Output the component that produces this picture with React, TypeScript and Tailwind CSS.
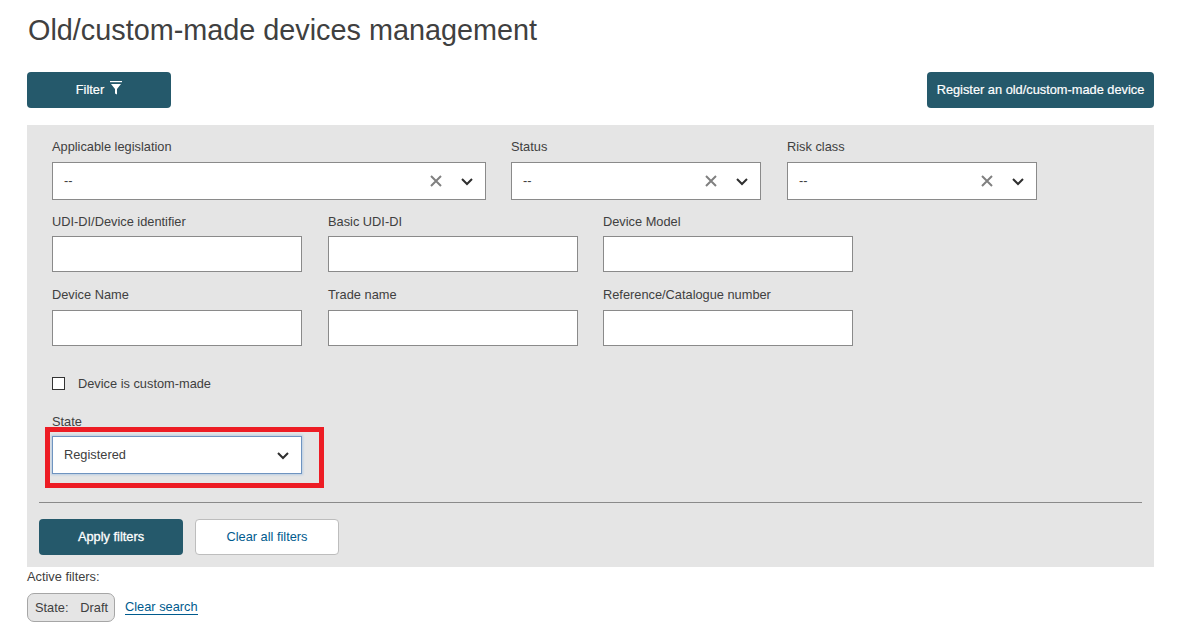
import React from "react";

const Chevron = () => (
  <svg width="14" height="9" viewBox="0 0 14 9" fill="none" className="shrink-0">
    <path d="M2 2l5 5 5-5" stroke="#2f2f2f" strokeWidth="2" />
  </svg>
);

const Cross = () => (
  <svg width="12" height="12" viewBox="0 0 12 12" fill="none" className="shrink-0">
    <path d="M1 1l10 10M11 1L1 11" stroke="#808080" strokeWidth="2" />
  </svg>
);

const Funnel = () => (
  <svg width="12" height="14" viewBox="0 0 12 14" fill="white" className="shrink-0">
    <rect x="0" y="0" width="12" height="1.2" />
    <path d="M1 3h10L7 8v5.5L5 12.5V8z" />
  </svg>
);

const Label = ({ children }: { children: React.ReactNode }) => (
  <div className="h-[15px] text-[12.8px] leading-[15px] text-[#404040] whitespace-nowrap">{children}</div>
);

const SelectBox = ({ label, width }: { label: string; width: string }) => (
  <div className={`flex flex-col ${width} gap-[8px]`}>
    <Label>{label}</Label>
    <div className="flex h-[38px] items-center border border-[#8a8a8a] bg-white pl-[11px] pr-[11px] text-[12.8px] text-[#404040]">
      <span className="flex-1">--</span>
      <span className="flex items-center gap-[18px]">
        <Cross />
        <Chevron />
      </span>
    </div>
  </div>
);

const TextField = ({ label, gap = "gap-[8px]" }: { label: string; gap?: string }) => (
  <div className={`flex w-[250px] flex-col ${gap}`}>
    <Label>{label}</Label>
    <div className="h-[36px] border border-[#8a8a8a] bg-white" />
  </div>
);

export default function App() {
  return (
    <div
      className="relative h-[635px] w-[1185px] overflow-hidden bg-white pl-[27px] pr-[31px] text-[#404040]"
      style={{ fontFamily: '"Liberation Sans", Arial, sans-serif' }}
    >
      <h1 className="h-[72px] pt-[13px] pl-[1px] text-[28.8px] leading-[34px] font-normal text-[#404040]">
        Old/custom-made devices management
      </h1>

      <div className="flex items-start justify-between">
        <button className="flex h-[36px] w-[144px] items-center justify-center gap-[6px] rounded-[4px] bg-[#25596b] text-[12.8px] text-white">
          <span className="[-webkit-text-stroke:0.2px_white]">Filter</span>
          <span className="-mt-[4px]">
            <Funnel />
          </span>
        </button>
        <button className="flex h-[36px] w-[227px] items-center justify-center rounded-[4px] bg-[#25596b] text-[12.8px] text-white [-webkit-text-stroke:0.2px_white]">
          Register an old/custom-made device
        </button>
      </div>

      <div className="mt-[17px] flex h-[442px] flex-col bg-[#e5e5e5] px-[12px] pt-[14px]">
        <div className="flex flex-col px-[13px]">
          <div className="flex">
            <SelectBox label="Applicable legislation" width="w-[434px]" />
            <div className="ml-[25px]">
              <SelectBox label="Status" width="w-[250px]" />
            </div>
            <div className="ml-[26px]">
              <SelectBox label="Risk class" width="w-[250px]" />
            </div>
          </div>

          <div className="mt-[14px] flex">
            <TextField label="UDI-DI/Device identifier" gap="gap-[7px]" />
            <div className="ml-[26px]">
              <TextField label="Basic UDI-DI" gap="gap-[7px]" />
            </div>
            <div className="ml-[25px]">
              <TextField label="Device Model" gap="gap-[7px]" />
            </div>
          </div>

          <div className="mt-[15px] flex">
            <TextField label="Device Name" />
            <div className="ml-[26px]">
              <TextField label="Trade name" />
            </div>
            <div className="ml-[25px]">
              <TextField label="Reference/Catalogue number" />
            </div>
          </div>

          <div className="mt-[31px] flex h-[13px] items-center gap-[13px]">
            <div className="h-[13px] w-[13px] border border-[#333333] bg-white" />
            <span className="text-[12.8px] leading-[15px] text-[#404040]">Device is custom-made</span>
          </div>

          <div className="mt-[24px] text-[12.8px] leading-[15px] text-[#404040]">State</div>
          <div className="mt-[7px] flex h-[38px] w-[250px] items-center justify-between border border-[#6f94c0] bg-white pl-[11px] pr-[11px] text-[12.8px] text-[#404040] shadow-[0_0_2px_1px_#b9cde4]">
            <span>Registered</span>
            <Chevron />
          </div>
        </div>

        <div className="mt-[28px] h-px bg-[#8a8a8a]" />

        <div className="mt-[16px] flex gap-[12px]">
          <button className="h-[36px] w-[144px] rounded-[4px] bg-[#25596b] text-[12.8px] text-white [-webkit-text-stroke:0.3px_white]">
            Apply filters
          </button>
          <button className="h-[36px] w-[144px] rounded-[4px] border border-[#bdbdbd] bg-white text-[12.8px] text-[#005b8e]">
            Clear all filters
          </button>
        </div>
      </div>

      <div className="mt-[3px] text-[12.8px] leading-[14px] text-[#404040]">Active filters:</div>
      <div className="mt-[9px] flex items-center gap-[10px]">
        <div className="flex h-[29px] w-[88px] items-center justify-between rounded-[7px] border border-[#a6a6a6] bg-[#e5e5e5] pl-[7px] pr-[6px] text-[12.8px] text-[#404040]">
          <span>State:</span>
          <span>Draft</span>
        </div>
        <a className="border-b border-[#005b8e] text-[12.8px] leading-[14px] text-[#005b8e]">Clear search</a>
      </div>

      <div className="absolute left-[45px] top-[427px] h-[61px] w-[279px] border-[5px] border-[#ed1c24]" />
    </div>
  );
}
